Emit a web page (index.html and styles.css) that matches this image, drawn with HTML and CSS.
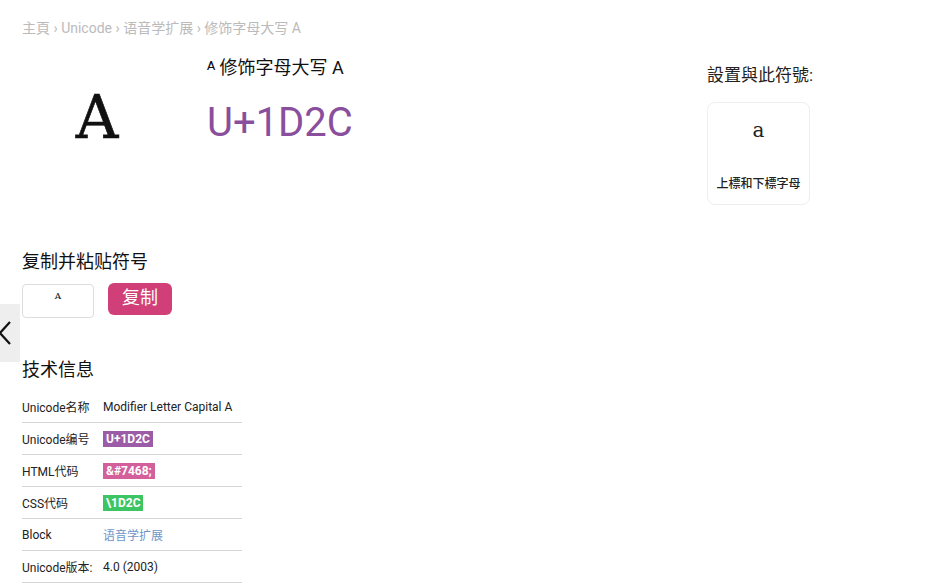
FILE: index.html
```html
<!DOCTYPE html>
<html lang="zh">
<head>
<meta charset="utf-8">
<title>修饰字母大写 A</title>
<link rel="stylesheet" href="styles.css">
</head>
<body>
<div class="page">
  <nav class="crumbs"><a>主頁</a> › <a>Unicode</a> › <a>语音学扩展</a> › <span>修饰字母大写 A</span></nav>
  <section class="hero">
    <div class="glyph">A</div>
    <div class="info">
      <h1 class="title">ᴬ 修饰字母大写 A</h1>
      <div class="code">U+1D2C</div>
    </div>
    <div class="related">
      <div class="related-title">設置與此符號:</div>
      <div class="card">
        <div class="card-glyph">a</div>
        <div class="card-label">上標和下標字母</div>
      </div>
    </div>
  </section>
  <h2 class="section-title">复制并粘贴符号</h2>
  <div class="copy-row">
    <div class="copy-input">ᴬ</div>
    <button class="copy-btn">复制</button>
  </div>
  <h2 class="section-title tech">技术信息</h2>
  <table class="tech-table">
    <tr><td>Unicode名称</td><td>Modifier Letter Capital A</td></tr>
    <tr><td>Unicode编号</td><td><span class="badge purple">U+1D2C</span></td></tr>
    <tr><td>HTML代码</td><td><span class="badge pink">&amp;#7468;</span></td></tr>
    <tr><td>CSS代码</td><td><span class="badge green">\1D2C</span></td></tr>
    <tr><td>Block</td><td><a class="link">语音学扩展</a></td></tr>
    <tr><td>Unicode版本:</td><td>4.0 (2003)</td></tr>
  </table>
</div>
<div class="side-tab">
  <svg width="14" height="26" viewBox="0 0 14 26"><path d="M12 2 L2 13 L12 24" fill="none" stroke="#111" stroke-width="2.2"/></svg>
</div>
</body>
</html>
```
FILE: styles.css
```css
html, body { margin: 0; padding: 0; background: #fff; }
body { font-family: Roboto, "Noto Sans CJK SC", sans-serif; color: #222; }
.page { padding: 18px 0 0 22px; }
.crumbs { font-size: 14px; line-height: 20px; color: #bbb; }
.crumbs a, .crumbs span { color: #bbb; }
.hero { display: grid; grid-template-columns: 185px 500px 120px; margin-top: 15px; height: 172px; }
.glyph { width: 150px; text-align: center; font-family: "DejaVu Serif", serif; font-size: 59px; line-height: 60px; margin-top: 35px; color: #111; -webkit-text-stroke: 0.6px #111; }
.title { margin: 0; font-weight: 400; font-size: 18px; line-height: 24px; color: #111; padding-top: 3px; }
.code { margin-top: 18px; font-size: 40px; line-height: 50px; color: #8a4f9c; }
.related { padding-top: 10px; }
.related-title { font-size: 17px; line-height: 24px; color: #222; }
.card { margin-top: 15px; width: 103px; height: 103px; border: 1px solid #eee; border-radius: 8px; display: flex; flex-direction: column; align-items: center; box-sizing: border-box; }
.card-glyph { font-family: "DejaVu Serif", serif; font-size: 20px; line-height: 24px; margin-top: 15px; color: #222; }
.card-label { margin-top: 34px; font-size: 12px; line-height: 16px; font-weight: 500; color: #222; }
.section-title { margin: 0; font-weight: 400; font-size: 18px; line-height: 24px; color: #111; padding-top: 25px; }
.copy-row { display: flex; align-items: flex-start; gap: 14px; margin-top: 10px; }
.copy-input { width: 72px; height: 34px; border: 1px solid #ddd; border-radius: 4px; box-sizing: border-box; text-align: center; font-family: "DejaVu Serif", serif; font-size: 14px; line-height: 28px; color: #111; }
.copy-btn { width: 64px; height: 32px; margin-top: -1px; border: none; border-radius: 6px; background: #d13f78; color: #fff; font-family: Roboto, "Noto Sans CJK SC", sans-serif; font-size: 18px; line-height: 30px; padding: 0 0 2px; }
.section-title.tech { padding-top: 40px; }
.tech-table { margin-top: 9px; border-collapse: collapse; width: 220px; font-size: 12px; color: #222; }
.tech-table td { height: 31px; padding: 0; border-bottom: 1px solid #d4d4d4; white-space: nowrap; vertical-align: middle; }
.tech-table td:first-child { width: 81px; }
.badge { color: #fff; font-weight: 700; padding: 1px 3px; }
.badge.purple { background: #9b5ba6; }
.badge.pink { background: #d35f9b; }
.badge.green { background: #3dc463; }
.link { color: #6f95c8; }
.side-tab { position: absolute; left: 0; top: 304px; width: 20px; height: 58px; background: #eee; display: flex; align-items: center; justify-content: flex-start; }
.side-tab svg { margin-left: -2px; }
```
